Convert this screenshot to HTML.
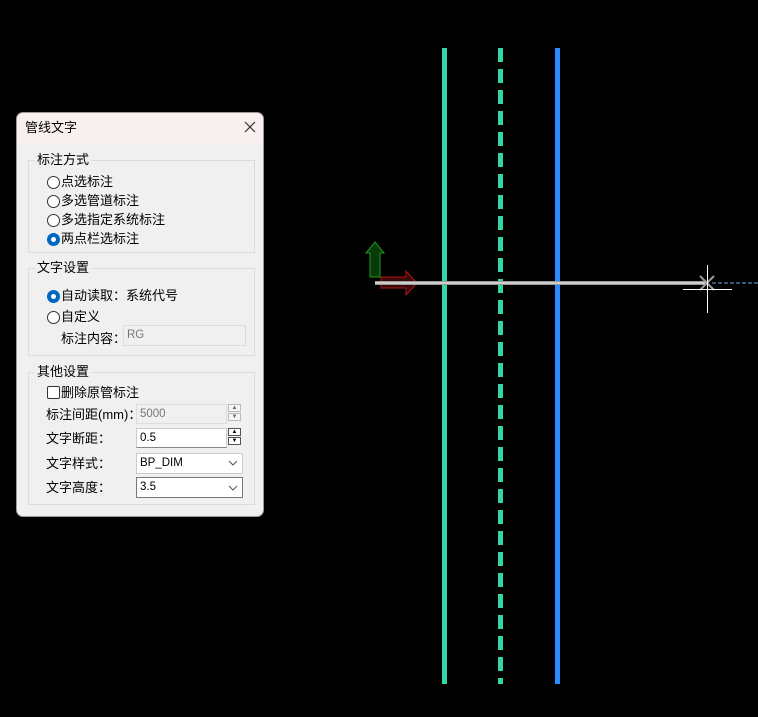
<!DOCTYPE html>
<html><head><meta charset="utf-8"><style>
*{box-sizing:border-box;margin:0;padding:0}
body{width:758px;height:717px;background:#000;position:relative;overflow:hidden;font-family:"Liberation Sans","Noto Sans CJK SC",sans-serif;font-size:12px;color:#000}
.abs{position:absolute}
.dlg{left:16px;top:112px;width:248px;height:405px;background:#f0f0f0;border:1px solid #9a9a9a;border-radius:7px;overflow:hidden}
.title{left:0;top:0;width:100%;height:30px;background:#f8f0ee;}
.title span{position:absolute;left:8px;top:4px;font-size:13px}
.grp{border:1px solid #dcdcdc;}
.lg{background:#f0f0f0;padding:0 2px;font-size:13px;margin-top:-3px}
.rad{width:13px;height:13px;border:1px solid #333;border-radius:50%;background:#fff}
.rad.on{border:none;background:#0067c0}
.rad.on::after{content:"";position:absolute;left:4px;top:4px;width:5px;height:5px;border-radius:50%;background:#fff}
.t{font-size:13px;white-space:nowrap;margin-top:-3px}
.inp{background:#fff;border:1px solid #ccc;border-bottom:1px solid #888;font-size:11.5px;padding:3px 0 0 3px}
.dis{background:#f0f0f0;border:1px solid #ddd;color:#777}
.sp{width:13px;height:8px;border:1px solid #bbb;background:#f5f5f5;font-size:6px;line-height:6px;text-align:center;color:#666}
.sp.a{border-color:#555;color:#000;background:#fff}
</style></head><body>
<div class="abs" style="left:442px;top:48px;width:5px;height:636px;background:#33d6a6"></div>
<div class="abs" style="left:498px;top:48px;width:5px;height:636px;background:repeating-linear-gradient(to bottom,#33d6a6 0 14px,transparent 14px 21px)"></div>
<div class="abs" style="left:555px;top:48px;width:5px;height:636px;background:#2a8cff"></div>
<svg class="abs" style="left:0;top:0" width="758" height="717">
<polygon points="366,253 375,242 384,253 380,253 380,277 370,277 370,253" fill="#0a3a0a" stroke="#1a9a1a" stroke-width="1"/>
<polygon points="381,277 406,277 406,271 417,283 406,295 406,288 381,288" fill="#3a0808" stroke="#b01818" stroke-width="1"/>
<rect x="375" y="281" width="332" height="4" fill="#9a9a9a"/>
<line x1="375" y1="283" x2="707" y2="283" stroke="#e0e0e0" stroke-width="1.5"/>
<line x1="712" y1="283" x2="758" y2="283" stroke="#6fa8dc" stroke-dasharray="4,2"/>
<line x1="700" y1="276" x2="714" y2="290" stroke="#999" stroke-width="2"/>
<line x1="714" y1="276" x2="700" y2="290" stroke="#999" stroke-width="2"/>
<line x1="707.5" y1="265" x2="707.5" y2="313" stroke="#fff"/>
<line x1="683" y1="289.5" x2="732" y2="289.5" stroke="#fff"/>
</svg>
<div class="abs dlg">
<div class="abs title"><span>管线文字</span>
<svg class="abs" style="left:227px;top:8px" width="12" height="12"><path d="M1 1L11 11M11 1L1 11" stroke="#333" stroke-width="1.2"/></svg></div>
<div class="abs grp" style="left:11px;top:47px;width:227px;height:93px"></div>
<div class="abs lg" style="left:18px;top:39px">标注方式</div>
<div class="abs rad" style="left:30px;top:63px"></div><div class="abs t" style="left:44px;top:61px">点选标注</div>
<div class="abs rad" style="left:30px;top:82px"></div><div class="abs t" style="left:44px;top:80px">多选管道标注</div>
<div class="abs rad" style="left:30px;top:101px"></div><div class="abs t" style="left:44px;top:99px">多选指定系统标注</div>
<div class="abs rad on" style="left:30px;top:120px"></div><div class="abs t" style="left:44px;top:118px">两点栏选标注</div>

<div class="abs grp" style="left:11px;top:155px;width:227px;height:88px"></div>
<div class="abs lg" style="left:18px;top:147px">文字设置</div>
<div class="abs rad on" style="left:30px;top:177px"></div><div class="abs t" style="left:44px;top:175px">自动读取：系统代号</div>
<div class="abs rad" style="left:30px;top:198px"></div><div class="abs t" style="left:44px;top:196px">自定义</div>
<div class="abs t" style="left:44px;top:218px">标注内容：</div>
<div class="abs inp dis" style="left:106px;top:212px;width:123px;height:21px">RG</div>

<div class="abs grp" style="left:11px;top:259px;width:227px;height:133px"></div>
<div class="abs lg" style="left:18px;top:251px">其他设置</div>
<div class="abs" style="left:30px;top:273px;width:13px;height:13px;border:1px solid #333;border-radius:2px;background:#fff"></div>
<div class="abs t" style="left:44px;top:272px">删除原管标注</div>
<div class="abs t" style="left:29px;top:294px">标注间距(mm)：</div>
<div class="abs inp dis" style="left:119px;top:291px;width:91px;height:20px">5000</div>
<div class="abs sp" style="left:211px;top:291px">▲</div><div class="abs sp" style="left:211px;top:300px">▼</div>
<div class="abs t" style="left:29px;top:318px">文字断距：</div>
<div class="abs inp" style="left:119px;top:315px;width:91px;height:20px">0.5</div>
<div class="abs sp a" style="left:211px;top:315px">▲</div><div class="abs sp a" style="left:211px;top:324px">▼</div>
<div class="abs t" style="left:29px;top:343px">文字样式：</div>
<div class="abs inp" style="left:119px;top:340px;width:107px;height:21px;border-color:#ccc">BP_DIM</div>
<svg class="abs" style="left:211px;top:347px" width="10" height="6"><path d="M1 1L5 5L9 1" stroke="#555" fill="none"/></svg>
<div class="abs t" style="left:29px;top:367px">文字高度：</div>
<div class="abs inp" style="left:119px;top:364px;width:107px;height:21px;border:1px solid #777">3.5</div>
<svg class="abs" style="left:211px;top:372px" width="10" height="6"><path d="M1 1L5 5L9 1" stroke="#555" fill="none"/></svg>
</div>
</body></html>
